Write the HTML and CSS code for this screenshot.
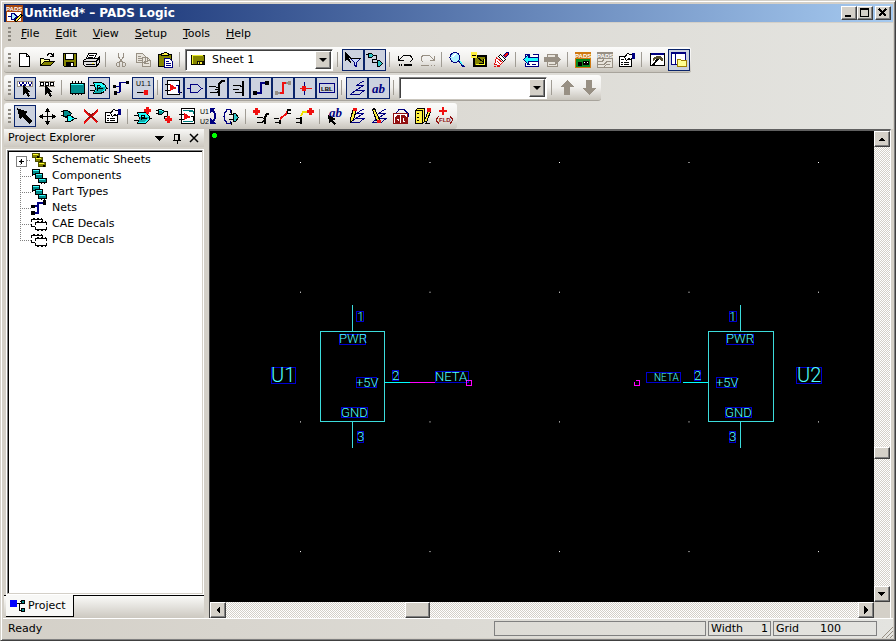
FILE: index.html
```html
<!DOCTYPE html>
<html lang="en">
<head>
<meta charset="utf-8">
<title>Untitled* - PADS Logic</title>
<link rel="stylesheet" href="styles.css">
</head>
<body>
<svg class="sprite" aria-hidden="true">
  <symbol id="new" viewBox="0 0 20 20"><path class="k fw" d="M4.500 3.500h7l3 3v10h-10zM11.500 3.500v3h3"/></symbol>
  <symbol id="open" viewBox="0 0 20 20"><path class="k fy" d="M3.500 15.500v-7h3l1 1h5v6z"/><path class="k fo" d="M3.500 15.500l4-4h10l-4 4z"/><path class="k" d="M10 5.500l2-2h2l2 2M16.500 3v4M13 6.500h4"/></symbol>
  <symbol id="save" viewBox="0 0 20 20"><path class="k fo" d="M4.500 3.500h13v13h-12l-1-1z"/><path class="k fw" d="M6.500 3.500h8v6h-8z"/><path class="k fk" d="M7.500 12.500h7v4h-7z"/><path class="fw" d="M12 13h2v3h-2z"/></symbol>
  <symbol id="print" viewBox="0 0 20 20"><path class="k fw" d="M7.500 3.500h8l-2 5h-8z"/><path class="k" d="M8 5.500h5M7 7.500h5"/><path class="k flg" d="M2.500 10.500l3-2h11l2-2v6l-3 4h-11l-2-2z"/><path class="k" d="M3 11.500h12v4M5 14.500h9M15 11.500l3-3"/><path class="fyy" d="M11 13h2v1h-2z"/></symbol>
  <symbol id="cut" viewBox="0 0 20 20"><path class="g" d="M7.500 3v4l4 5M12.500 3v4l-4 5M6.500 12.500h2v4h-2l-1-1v-2zM11.500 12.500h2l1 1v2l-1 1h-2z"/></symbol>
  <symbol id="copy" viewBox="0 0 20 20"><path class="g fl" d="M3.500 3.500h6l3 3v6h-9zM9.500 7.500h5l3 3v6h-8z"/><path class="g" d="M5 6.500h3M5 8.500h5M5 10.500h4M11 11.500h4M11 13.500h5M14.500 7.500v3h3"/></symbol>
  <symbol id="paste" viewBox="0 0 20 20"><path class="k fo" d="M3.500 4.500h13v12h-13z"/><path class="k fyy" d="M6.500 5.500v-2h2l1-1h2l1 1h1v2z"/><path class="n fw" d="M9.500 8.500h5l3 3v6h-8z"/><path class="n" d="M11 11.500h3M11 13.500h5M11 15.500h5"/></symbol>
  <symbol id="sheet" viewBox="0 0 20 20"><path class="k fo" d="M2.500 4.500h15v11h-15z"/><path class="y" d="M3 5.500h13M3.500 5v9"/><path class="k fyy" d="M9.500 11.500h7v3h-7z"/><path class="k" d="M11.500 12v3M14.500 12v3"/></symbol>
  <symbol id="filter" viewBox="0 0 20 20"><path class="fk" d="M2 2l6 6H6l2 4-1 1-3-4-2 2z"/><path class="n fb" d="M7.500 8.500h10l-4 4v4l-2-1v-3z"/><path class="k" d="M7 8.500h11"/></symbol>
  <symbol id="trace" viewBox="0 0 20 20"><path class="k fc" d="M3.500 3.500h3l2 2-2 2h-3zM12.500 10.500h2l3 3-3 3h-2z"/><path class="k" d="M1 4.500h2M8 5.500h3v4h-4v3h5"/></symbol>
  <symbol id="undo" viewBox="0 0 20 20"><path class="k" d="M3.500 6v4.500h5M4 10l4-4 4-1h3l2 3v2l-2 2"/><path class="k2" d="M4 15h1m1 0h1m2 0h8"/></symbol>
  <symbol id="redo" viewBox="0 0 20 20"><path class="g" d="M17.500 6v4.500h-5M17 10l-4-4-4-1H6L4 8v2l2 2"/><path class="g" d="M4 15.500h8m2 0h1m2 0h1"/></symbol>
  <symbol id="zoom" viewBox="0 0 20 20"><circle class="n flb" cx="8" cy="7.500" r="5"/><path class="fw" d="M5 6l3-3 1 1-3 4z"/><path class="n2" d="M12 11l5 6"/><path class="c" d="M12 10l4 5"/></symbol>
  <symbol id="board" viewBox="0 0 20 20"><path class="k2 fo" d="M5 6h12v10H5z"/><path class="y" d="M7 14.500h8v-6"/><path class="k" d="M8 7l6 5m0-3v4h-4"/><circle class="fyy" cx="5" cy="5" r="3.500"/><path class="k" d="M3 5.500h4"/></symbol>
  <symbol id="redraw" viewBox="0 0 20 20"><path class="r fw" d="M5.500 7.500l6 5-3 3-5-1z"/><path class="r" d="M3 16.500h2m1 0h3M7 9l3 3M6 11l3 3"/><path class="k fw" d="M7.500 6.500l2-2 5 5-2 2z"/><path class="n fr" d="M12.500 5.500l3-3h2v2l-3 3z"/></symbol>
  <symbol id="back" viewBox="0 0 20 20"><path class="n fw" d="M4.500 4.500h4v3h-4zM11.500 4.500h6v12h-13v-4"/><path class="n" d="M6 14.500h3m2 0h4"/><path class="n fcy" d="M2.500 9.500l5-5v3h10v4h-10v3z"/></symbol>
  <symbol id="next" viewBox="0 0 20 20"><path class="g fl" d="M4.500 4.500h10v12h-10zM6 14.500h7"/><path class="g fg" d="M17.500 9.500l-5-5v3h-11v4h11v3z"/></symbol>
  <symbol id="props" viewBox="0 0 20 20"><path class="k fw" d="M2.500 6.500h12v10h-12z"/><path class="k" d="M4 9.500h3m2 0h4M4 12.500h2m1 0h5M4 14.500h2m1 0h5"/><path class="k fw" d="M7.500 7.500l3-4 6 2-2 4-3-1-2 2z"/><path class="n fn" d="M15.500 3.500h2v5h-2z"/></symbol>
  <symbol id="hammer" viewBox="0 0 20 20"><path class="k fw" d="M3.500 3.500h14v12h-14z"/><path class="n2" d="M4 4h13"/><path class="fhead" d="M6 8l4-2h3l3 3v2h-2l-2-2-2 1-2-1-2 2z"/><path class="k2" d="M11 9l-6 7"/></symbol>
  <symbol id="explorer" viewBox="0 0 20 20"><path class="n fw" d="M2.500 2.500h14v12h-14z"/><path class="n2" d="M3 3h14"/><path class="n" d="M6.500 4v11"/><path class="o fy" d="M8.500 9.500h3l1 1h5v6h-9z"/></symbol>
  <symbol id="cursor" viewBox="0 0 20 20"><path class="fk" d="M8 7l8 7h-3l2 4-2 1-2-4-3 2z"/></symbol>
  <symbol id="wave" viewBox="0 0 20 20"><path class="g fw" d="M2.500 3.500h15v5h-15z"/><path class="n" d="M4 4l2 4 2-4m0 0l2 4 2-4m1 0l2 4 2-4"/><use href="#cursor"/></symbol>
  <symbol id="boxes" viewBox="0 0 20 20"><path class="k fw" d="M3.500 4.500h3v3h-3zM8.500 4.500h3v3h-3zM13.500 4.500h3v3h-3z"/><path class="g" d="M2 3.500h16M2 8.500h16"/><use href="#cursor"/></symbol>
  <symbol id="chip" viewBox="0 0 20 20"><path class="k" d="M5.500 3v14m3-14v14m3-14v14m3-14v14"/><path class="k ft" d="M3.500 5.500h14v10h-14z"/><path class="c" d="M4 6.500h12"/></symbol>
  <symbol id="gate" viewBox="0 0 20 20"><path class="k" d="M1 7.500h4m-4 5h4m12-2h2"/><path class="k fcy" d="M4.500 4.500h8l4 3 1 3-2 3-4 2h-7l2-5z"/><path class="ftt" d="M6 14l2-5h9l-3 4-3 2H6z"/><path class="k" d="M8.500 12.500v-5h2l1 1-2 2h4"/></symbol>
  <symbol id="net" viewBox="0 0 20 20"><path class="n" d="M3 14.500h5v-10h8M8.500 8.500h-4M9.500 5v9"/><path class="fk" d="M2 7h3v3H2zM3 13h3v4H3zM15 3h3v3h-3z"/></symbol>
  <symbol id="part" viewBox="0 0 20 20"><path class="k fw" d="M4.500 2.500h12v14h-12z"/><path class="k" d="M2 6.500h5m-5 6h5m10 2h2"/><path class="fr" d="M7 6l7 4-7 3z"/><path class="n" d="M13 7.500h2v7h3"/></symbol>
  <symbol id="port" viewBox="0 0 20 20"><path class="n" d="M2 10.500h3.500m0-4h7l4 4-4 4h-7zM16 10.500h2"/></symbol>
  <symbol id="bus1" viewBox="0 0 20 20"><path class="k2" d="M18 3h-3l-3 3v12"/><path class="k" d="M2 8.500h6l2 1h2M3 14.500h6l3-1M8 11.500h4"/></symbol>
  <symbol id="bus2" viewBox="0 0 20 20"><path class="k2" d="M14 3v15"/><path class="k" d="M4 7.500h6l3 1M6 14.500h8M4 11.500h6"/></symbol>
  <symbol id="wire" viewBox="0 0 20 20"><path class="n2" d="M4 15h6V5h6"/><path class="fk" d="M2 13h4v4H2zM14 3h4v4h-4z"/></symbol>
  <symbol id="wirer" viewBox="0 0 20 20"><path class="g2" d="M3 15h6m1-10h7"/><path class="r2" d="M7 15h3V5h3"/><path class="fg" d="M2 13h3v4H2zM15 3h3v4h-3z"/></symbol>
  <symbol id="junction" viewBox="0 0 20 20"><path class="r" d="M5 10.500h12"/><path class="n" d="M9.500 4v13"/><circle class="fr" cx="9" cy="10.500" r="2.500"/></symbol>
  <symbol id="scribble" viewBox="0 0 20 20"><path class="n" d="M16.500 3l-7 4.500h7l-7 4.500h8l-5 4.500h-9l6-5"/></symbol>
  <symbol id="up" viewBox="0 0 20 20"><path class="fgd" d="M10 2l7 7h-4v8H7V9H3z"/></symbol>
  <symbol id="down" viewBox="0 0 20 20"><path class="fgd" d="M10 17l7-7h-4V2H7v8H3z"/></symbol>
  <symbol id="select" viewBox="0 0 20 20"><path class="fk" d="M2 2l11 4-3 2 7 7-3 3-7-7-2 3z"/></symbol>
  <symbol id="move" viewBox="0 0 20 20"><path class="k" d="M10.500 3v15M3 10.500h15"/><path class="fk" d="M10.500 2l3 4h-6zM10.500 19l3-4h-6zM2 10.500l4-3v6zM19 10.500l-4-3v6z"/></symbol>
  <symbol id="dup" viewBox="0 0 20 20"><path class="k" d="M2 5.500h3m-3 4h3m1 2h3m-3 4h3m6-3h3"/><path class="k ft" d="M4.500 4.500h4l4 3-3 3h-5z"/><path class="k fcy" d="M8.500 9.500h3l4 3-4 3h-3z"/></symbol>
  <symbol id="delete" viewBox="0 0 20 20"><path class="r2" d="M3 4l13 12M17 4L3 17"/><path class="dr" d="M4 4l13 12M16 4L4 15"/></symbol>
  <symbol id="plus" viewBox="0 0 20 20"><path class="fr" d="M2 0h3v2h2v3H5v2H2V5H0V2h2z"/></symbol>
  <symbol id="addpart" viewBox="0 0 20 20"><path class="k" d="M1 9.500h4m-4 5h4m12-2h2"/><path class="k fcy" d="M4.500 6.500h8l4 4v3l-4 4h-8l2-5z"/><path class="ftt" d="M6 16l1-5h9l-4 5z"/><path class="k" d="M8.500 14v-5h3v2l-2 1h4"/><use href="#plus" x="11" y="1" width="20" height="20"/></symbol>
  <symbol id="addnet" viewBox="0 0 20 20"><path class="k ft" d="M3.500 3.500h3l3 2-3 3h-3z"/><path class="c" d="M4 4.500h2l2 1"/><path class="k" d="M1 4.500h2m-2 3h2m7-2h2v5h-3v2h3"/><use href="#plus" x="10" y="10" width="20" height="20"/></symbol>
  <symbol id="newhier" viewBox="0 0 20 20"><path class="k fw" d="M4.500 2.500h13v15h-13z"/><path class="t" d="M6 4.500h10M12 5.500h4v2M6 15.500h10"/><path class="k" d="M2 8.500h5m-5 5h5m7-3h2v4h2"/><path class="fr" d="M7 7l7 4-7 3z"/></symbol>
  <symbol id="swappin" viewBox="0 0 20 20"><path class="k fc" d="M12.500 7.500h2l3 4-3 4h-2z"/><path class="k" d="M8 8.500h4m-4 5h4m-2-10v4m0 8v3"/><path class="n" d="M6 4.500l-2 2-1 4 1 4 2 2M5 3.500h4v3M5 17.500h4v-3"/></symbol>
  <symbol id="addbus" viewBox="0 0 20 20"><path class="k2" d="M18 8h-2l-2 3v7"/><path class="k" d="M6 11.500h5l2 1M6 16.500h5l2-2"/><use href="#plus" x="2" y="2" width="20" height="20"/></symbol>
  <symbol id="splitbus" viewBox="0 0 20 20"><path class="k2" d="M18 4h-4M7 18v-4"/><path class="r2" d="M7 13l7-6V5"/><path class="k" d="M1 12.500h5m-4 4h4m8-13v4h4"/></symbol>
  <symbol id="extbus" viewBox="0 0 20 20"><path class="k2" d="M6 11v7"/><path class="y2" d="M6 10l2-4h5"/><path class="k" d="M1 12.500h4m-4 4h4"/><use href="#plus" x="12" y="2" width="20" height="20"/></symbol>
  <symbol id="pencil" viewBox="0 0 20 20"><path class="k fyy" d="M3.500 12.500l3-10 3 1-3 10-3 3z"/><path class="fr" d="M6 2h4v3H6z"/></symbol>
  <symbol id="draw" viewBox="0 0 20 20"><use href="#scribble"/><use href="#pencil"/></symbol>
  <symbol id="modify" viewBox="0 0 20 20"><use href="#scribble"/><path class="k fyy" d="M3.500 3.500l2-1 5 11v3l-3-2z"/><path class="fr" d="M8 14h4v3H8z"/></symbol>
  <symbol id="book" viewBox="0 0 20 20"><path class="k fyy" d="M2.500 4.500l2-2h7v13l-2 2h-7z"/><path class="k" d="M2 4.500h7v12M4 7.500h2m-2 4h2m-2 3h2M12 17.500h5"/><path class="k fyy" d="M11.500 14.500l4-10 2 1-4 11z"/><path class="fr" d="M14 2h4v4h-4z"/></symbol>
  <symbol id="sheets" viewBox="0 0 16 16"><g class="o2"><path d="M1.500 1.500h7v4h-7zM4.500 5.500h7v4h-7zM7.500 10.500h7v4h-7z"/></g><path class="y" d="M2 2.500h5M5 6.500h5M8 11.500h5"/><path class="fk" d="M6 4h2v2H6zM9 8h2v2H9zM12 13h2v2h-2z"/></symbol>
  <symbol id="chips" viewBox="0 0 16 16"><g class="k ft"><path d="M1.500 1.500h7v5h-7zM4.500 5.500h7v5h-7zM7.500 10.500h8v4h-8z"/></g><path class="c" d="M2 2.500h6M5 6.500h6M8 11.500h6"/><path class="k" d="M1 7.500h1m2 0h1M10 15.500h1m2 0h1"/></symbol>
  <symbol id="nets" viewBox="0 0 16 16"><path class="n2" d="M1 13h6V3h7M2 6h5"/><path class="fk" d="M0 5h4v3H0zM0 11h4v4H0zM12 0h3v5h-3z"/></symbol>
  <symbol id="decal" viewBox="0 0 16 16"><path class="k fw" d="M.5 3.500h11v7H.5z"/><path class="k fw" d="M4.500 6.500h11v7h-11z"/><path class="k" d="M2 2.500h2m2 0h2m2 0h1M6 5.500h2m2 0h2m2 0h1M6 14.500h2m2 0h2m2 0h1"/><path class="wh" d="M.5 6v2m4 1v2m11-2v2"/></symbol>
  <symbol id="tree" viewBox="0 0 16 16"><path class="fblue" d="M0 2h7v7H0z"/><path class="k" d="M7 5.500h4m-1.500 0v7h2m-2-9h2"/><path class="k ft" d="M11.500 2.500h3v3h-3zM11.500 10.500h3v3h-3z"/></symbol>
</svg>

<div class="window">
  <header class="titlebar">
    <svg class="appicon icon" viewBox="0 0 17 17"><path class="fbrown" d="M0 0h17v17H0z"/><path class="fw" d="M1 7h14v9H1z"/><path class="n flb" d="M2 11.500h3m0-3h3l3 3-3 3H5z"/><path class="k fyy" d="M8.500 15.500l6-6 2 1-6 6z"/><text class="t6 tw" x="0" y="6">PADS</text></svg>
    <h1>Untitled* – PADS Logic</h1>
    <button class="cap" aria-label="Minimize"><svg viewBox="0 0 12 10"><path class="fk" d="M2 7h6v2H2z"/></svg></button>
    <button class="cap" aria-label="Maximize"><svg viewBox="0 0 12 10"><path class="k" d="M1.500 1v7.500h8V1"/><path class="k2" d="M1 1h9"/></svg></button>
    <button class="cap close" aria-label="Close"><svg viewBox="0 0 12 10"><path class="kx" d="M2 1l7 7M9 1L2 8"/></svg></button>
  </header>

  <div class="bars">
    <nav class="menu">
      <span class="grip"></span>
      <button><u>F</u>ile</button><button><u>E</u>dit</button><button><u>V</u>iew</button><button><u>S</u>etup</button><button><u>T</u>ools</button><button><u>H</u>elp</button>
    </nav>

    <div class="toolbar" role="toolbar" aria-label="Standard">
      <span class="grip"></span>
      <button class="tb" aria-label="New"><svg><use href="#new"/></svg></button>
      <button class="tb" aria-label="Open"><svg><use href="#open"/></svg></button>
      <button class="tb" aria-label="Save"><svg><use href="#save"/></svg></button>
      <button class="tb" aria-label="Print"><svg><use href="#print"/></svg></button>
      <span class="sep"></span>
      <button class="tb" aria-label="Cut"><svg><use href="#cut"/></svg></button>
      <button class="tb" aria-label="Copy"><svg><use href="#copy"/></svg></button>
      <button class="tb" aria-label="Paste"><svg><use href="#paste"/></svg></button>
      <span class="sep"></span>
      <div class="combo">
        <svg><use href="#sheet"/></svg>
        <select aria-label="Sheet"><option>Sheet 1</option></select>
        <span class="drop" aria-hidden="true"></span>
      </div>
      <span class="sep"></span>
      <button class="tb on" aria-label="Selection filter"><svg><use href="#filter"/></svg></button>
      <button class="tb on" aria-label="Schematic toolbar"><svg><use href="#trace"/></svg></button>
      <span class="sep"></span>
      <button class="tb" aria-label="Undo"><svg><use href="#undo"/></svg></button>
      <button class="tb" aria-label="Redo"><svg><use href="#redo"/></svg></button>
      <span class="sep"></span>
      <button class="tb" aria-label="Zoom"><svg><use href="#zoom"/></svg></button>
      <button class="tb" aria-label="Sheet view"><svg><use href="#board"/></svg></button>
      <button class="tb" aria-label="Redraw"><svg><use href="#redraw"/></svg></button>
      <span class="sep"></span>
      <button class="tb" aria-label="Previous view"><svg><use href="#back"/></svg></button>
      <button class="tb" aria-label="Next view"><svg><use href="#next"/></svg></button>
      <span class="sep"></span>
      <button class="tb" aria-label="PADS Layout"><svg class="icon" viewBox="0 0 20 20"><path class="forange" d="M2 2h16v16H2z"/><path class="fgr" d="M3 9h14v8H3z"/><path class="k fk" d="M5.500 12.500h3v3h-3z"/><path class="fk" d="M10 11h6v4h-6z"/><path class="wh" d="M11 12.500h1m2 0h1"/><text class="t6 tw" x="2" y="8">PADS</text></svg></button>
      <button class="tb" aria-label="PADS Router"><svg class="icon" viewBox="0 0 20 20"><path class="g fl" d="M2.500 2.500h15v15h-15z"/><path class="fg" d="M2 2h16v7H2z"/><path class="g" d="M3 11.500h4l2-2M3 14.500h6l3-3h4M9 17l3-3h3"/><text class="t6 tw" x="2" y="8">PADS</text></svg></button>
      <button class="tb" aria-label="Properties"><svg><use href="#props"/></svg></button>
      <span class="sep"></span>
      <button class="tb" aria-label="Output window"><svg><use href="#hammer"/></svg></button>
      <button class="tb on" aria-label="Project Explorer"><svg><use href="#explorer"/></svg></button>
    </div>

    <div class="toolbar" role="toolbar" aria-label="Selection filter">
      <span class="grip"></span>
      <button class="tb on" aria-label="Anything"><svg><use href="#wave"/></svg></button>
      <button class="tb" aria-label="Nothing"><svg><use href="#boxes"/></svg></button>
      <span class="sep"></span>
      <button class="tb" aria-label="Parts"><svg><use href="#chip"/></svg></button>
      <button class="tb on" aria-label="Gates"><svg><use href="#gate"/></svg></button>
      <button class="tb" aria-label="Nets"><svg><use href="#net"/></svg></button>
      <button class="tb on" aria-label="Pins"><svg class="icon" viewBox="0 0 20 20"><text class="t7 tk" x="3" y="8">U1.1</text><path class="k" d="M4 14.500h6"/><circle class="fr" cx="13" cy="14.500" r="2.500"/></svg></button>
      <span class="sep"></span>
      <button class="tb on" aria-label="Hierarchical symbols"><svg><use href="#part"/></svg></button>
      <button class="tb on" aria-label="Off-page"><svg><use href="#port"/></svg></button>
      <button class="tb on" aria-label="Buses"><svg><use href="#bus1"/></svg></button>
      <button class="tb on" aria-label="Bus segments"><svg><use href="#bus2"/></svg></button>
      <button class="tb on" aria-label="Connections"><svg><use href="#wire"/></svg></button>
      <button class="tb on" aria-label="Connection segments"><svg><use href="#wirer"/></svg></button>
      <button class="tb on" aria-label="Tie dots"><svg><use href="#junction"/></svg></button>
      <button class="tb on" aria-label="Labels"><svg class="icon" viewBox="0 0 20 20"><path class="n" d="M2.500 5.500h15v9h-15z"/><text class="t6 tk" x="4" y="13">LBL</text></svg></button>
      <span class="sep"></span>
      <button class="tb on" aria-label="Drafting items"><svg><use href="#scribble"/></svg></button>
      <button class="tb on" aria-label="Text"><svg class="icon" viewBox="0 0 20 20"><text class="tab" x="3" y="15">ab</text></svg></button>
      <span class="sep"></span>
      <div class="combo">
        <input type="text" aria-label="Find">
        <button class="drop" aria-label="Show list"></button>
      </div>
      <span class="sep"></span>
      <button class="tb" aria-label="Up"><svg><use href="#up"/></svg></button>
      <button class="tb" aria-label="Down"><svg><use href="#down"/></svg></button>
    </div>

    <div class="toolbar" role="toolbar" aria-label="Schematic editing">
      <span class="grip"></span>
      <button class="tb on" aria-label="Select"><svg><use href="#select"/></svg></button>
      <button class="tb" aria-label="Move"><svg><use href="#move"/></svg></button>
      <button class="tb" aria-label="Duplicate"><svg><use href="#dup"/></svg></button>
      <button class="tb" aria-label="Delete"><svg><use href="#delete"/></svg></button>
      <button class="tb" aria-label="Item properties"><svg><use href="#props"/></svg></button>
      <span class="sep"></span>
      <button class="tb" aria-label="Add part"><svg><use href="#addpart"/></svg></button>
      <button class="tb" aria-label="Add connection"><svg><use href="#addnet"/></svg></button>
      <button class="tb" aria-label="New hierarchical symbol"><svg><use href="#newhier"/></svg></button>
      <button class="tb" aria-label="Swap reference designators"><svg class="icon" viewBox="0 0 20 20"><text class="t7 tk" x="1" y="8">U1</text><text class="t7 tk" x="1" y="18">U2</text><path class="n2" d="M13 4q7 6 0 12"/><path class="fn" d="M11 2h5l-5 5zM11 12v6h6z"/></svg></button>
      <button class="tb" aria-label="Swap pins"><svg><use href="#swappin"/></svg></button>
      <span class="sep"></span>
      <button class="tb" aria-label="Add bus"><svg><use href="#addbus"/></svg></button>
      <button class="tb" aria-label="Split bus"><svg><use href="#splitbus"/></svg></button>
      <button class="tb" aria-label="Extend bus"><svg><use href="#extbus"/></svg></button>
      <span class="sep"></span>
      <button class="tb" aria-label="Create text"><svg class="icon" viewBox="0 0 20 20"><text class="tab" x="4" y="11">ab</text><path class="fk" d="M3 9l8 4-3 1 3 4-2 1-3-4-2 2z"/></svg></button>
      <button class="tb" aria-label="Create 2D line"><svg><use href="#draw"/></svg></button>
      <button class="tb" aria-label="Modify 2D line"><svg><use href="#modify"/></svg></button>
      <button class="tb" aria-label="Library line"><svg class="icon" viewBox="0 0 20 20"><path class="n" d="M5 7.500l3-4h5l4 4v3"/><path class="dr fw" d="M2.500 7.500h14v10h-14z"/><path class="fdr" d="M4 11l2-2h3v8H4zM10 9h4l2 3v5h-6z"/><path class="wh" d="M6 13h1.500v2M12 12v3h2"/></svg></button>
      <button class="tb" aria-label="Library"><svg><use href="#book"/></svg></button>
      <button class="tb" aria-label="Add field"><svg class="icon" viewBox="0 0 20 20"><path class="r2" d="M8 1v8M4 5h8"/><path class="dr" d="M4 10l-3 4 3 4M15 10l3 4-3 4"/><text class="t6 tdr" x="4" y="16">FLD</text></svg></button>
    </div>
  </div>

  <main class="work">
    <aside class="panel">
      <div class="panelhead">
        <h2>Project Explorer</h2>
        <button aria-label="Menu"><svg viewBox="0 0 12 12"><path class="fk" d="M1 4h9l-4 5H5z"/></svg></button>
        <button aria-label="Pin"><svg viewBox="0 0 12 12"><path class="k" d="M3.500 8V2.500h5V8M2 8.500h8M6.500 9v3M7.500 3v5"/></svg></button>
        <button aria-label="Close"><svg viewBox="0 0 12 12"><path class="kt" d="M2 2l8 8M10 2l-8 8"/></svg></button>
      </div>
      <ul class="tree">
        <li class="parent"><svg><use href="#sheets"/></svg>Schematic Sheets</li>
        <li><svg><use href="#chips"/></svg>Components</li>
        <li><svg><use href="#chips"/></svg>Part Types</li>
        <li><svg><use href="#nets"/></svg>Nets</li>
        <li><svg><use href="#decal"/></svg>CAE Decals</li>
        <li><svg><use href="#decal"/></svg>PCB Decals</li>
      </ul>
      <div class="tabs"><button><svg><use href="#tree"/></svg>Project</button></div>
    </aside>

    <section class="view">
      <svg class="schematic" role="img" aria-label="Schematic sheet">
        <defs>
          <pattern id="grid" patternUnits="userSpaceOnUse" x="90" y="31" width="129.500" height="129.700"><path class="fw" d="M0 0h1v1H0z"/></pattern>
        </defs>
        <rect width="100%" height="100%" fill="url(#grid)"/>
        <circle class="origin" cx="4.500" cy="4.500" r="2.500"/>
        <g>
          <path class="tag" d="M61.500 236.500h24v16h-24zM146.500 180.500h7v10h-7zM129.500 203.500h26v10h-26zM146.500 246.500h20v10h-20zM182.500 239.500h6v10h-6zM131.500 276.500h26v10h-26zM147.500 300.500h6v11h-6zM225.500 240.500h33v11h-33z"/>
          <path class="sym" d="M110.500 200.500h64v90h-64zM142.500 174v26M142.500 291v26"/>
          <path class="pin" d="M175 251.500h25"/><path class="wire" d="M200 251.500h25M256.500 249.500h5v5h-5z"/>
          <text class="ref" x="61" y="251">U1</text>
          <text x="147" y="190">1</text><text x="129" y="212">PWR</text><text x="146" y="256">+5V</text><text x="182" y="249">2</text><text x="131" y="286">GND</text><text x="147" y="310">3</text>
          <text x="225" y="250">NETA</text>
        </g>
        <g>
          <path class="tag" d="M586.500 236.500h25v16h-25zM519.500 180.500h7v10h-7zM516.500 203.500h27v10h-27zM506.500 246.500h20v10h-20zM484.500 239.500h6v10h-6zM515.500 276.500h26v10h-26zM519.500 300.500h6v11h-6zM436.500 241.500h34v10h-34z"/>
          <path class="sym" d="M498.500 200.500h65v90h-65zM530.500 174v26M530.500 291v26"/>
          <path class="pin" d="M473 251.500h25"/><path class="wire" d="M424.500 251v3.500h5V249.500h-4"/>
          <text class="ref" x="587" y="251">U2</text>
          <text x="519" y="190">1</text><text x="516" y="212">PWR</text><text x="506" y="256">+5V</text><text x="484" y="249">2</text><text x="515" y="286">GND</text><text x="519" y="310">3</text>
          <text class="small" x="444" y="250">NETA</text>
        </g>
      </svg>
      <div class="scroll vert">
        <button aria-label="Scroll up"><svg viewBox="0 0 12 12"><path class="fk" d="M2 8h7L6 5H5z"/></svg></button>
        <span class="before"></span><span class="thumb"></span><span class="after"></span>
        <button aria-label="Scroll down"><svg viewBox="0 0 12 12"><path class="fk" d="M2 4h7L6 8H5z"/></svg></button>
      </div>
      <div class="scroll horiz">
        <button aria-label="Scroll left"><svg viewBox="0 0 12 12"><path class="fk" d="M8 2v8L4 6z"/></svg></button>
        <span class="before"></span><span class="thumb"></span><span class="after"></span>
        <button aria-label="Scroll right"><svg viewBox="0 0 12 12"><path class="fk" d="M4 2v8l4-4z"/></svg></button>
      </div>
      <span class="corner"></span>
    </section>
  </main>

  <footer class="status">
    <span class="ready">Ready</span>
    <span class="cell message"></span>
    <span class="cell width"><span>Width</span><span>1</span></span>
    <span class="cell gridsize"><span>Grid</span><span>100</span></span>
    <svg class="sizer" viewBox="0 0 12 12"><path class="g" d="M1 12L12 1M5 12l7-7M9 12l3-3"/></svg>
  </footer>
</div>
</body>
</html>
```

FILE: styles.css
```css
* { box-sizing: border-box; }
body, h1, h2, ul { margin: 0; padding: 0; }
body, button, input, select {
  font: 11px/16px "DejaVu Sans", sans-serif;
  color: #000;
}
button { padding: 0; border: 0; background: none; }
svg { display: block; flex: none; shape-rendering: crispEdges; }
.sprite { position: absolute; width: 0; height: 0; }

.window {
  display: flex;
  flex-direction: column;
  height: 100vh;
  padding: 2px;
  background: #d4d0c8;
  border: 1px solid #d4d0c8;
  border-right-color: #404040;
  border-bottom-color: #404040;
  box-shadow: inset 1px 1px #fff, inset -1px -1px #808080;
  overflow: hidden;
}

/* title bar */
.titlebar {
  display: flex;
  align-items: center;
  height: 18px;
  margin: 1px 0 1px 1px;
  padding-right: 2px;
  background: linear-gradient(90deg, #0a246a, #a6caf0);
}
.appicon { width: 17px; height: 17px; margin: 0 1px 0 2px; }
h1 { flex: 1; font-size: 12px; font-weight: bold; color: #fff; }
.cap, .scroll button, .thumb, .drop {
  background: #d4d0c8;
  border: 1px solid;
  border-color: #fff #404040 #404040 #fff;
  box-shadow: inset -1px -1px #808080;
}
.cap { width: 16px; height: 14px; }
.cap svg { width: 12px; height: 10px; margin: 1px; }
.close { margin-left: 2px; }

/* menu and toolbars */
.bars {
  display: flex;
  flex-direction: column;
  align-items: flex-start;
  gap: 2px;
  padding: 0 1px;
  background: linear-gradient(90deg, #d4d0c8, #e4e4e0);
}
.menu { display: flex; align-items: center; height: 22px; }
.menu button { padding: 0 8px; line-height: 18px; }
.menu .grip { margin-right: 2px; }
.toolbar {
  display: flex;
  align-items: center;
  height: 26px;
  padding-right: 1px;
  background: linear-gradient(#fcfcfb, #f0efec 50%, #c8c4bc);
  border-bottom: 1px solid #a8a49c;
  border-radius: 3px;
}
.toolbar:last-child { border-bottom: 0; }
.grip {
  width: 3px;
  height: 14px;
  margin: 0 3px 0 4px;
  background: repeating-linear-gradient(#8c8880 0 2px, transparent 2px 4px);
}
.sep { width: 1px; height: 15px; margin: 0 4px 0 3px; background: #a09c94; }
.tb { width: 22px; height: 22px; border: 1px solid transparent; }
.tb svg { width: 20px; height: 20px; }
.on { background: #ccd2df; border-color: #0a246a; }
.combo {
  display: flex;
  width: 148px;
  height: 22px;
  margin: 0 1px;
  padding: 1px;
  background: #fff;
  border: 1px solid;
  border-color: #808080 #fff #fff #808080;
  box-shadow: inset 1px 1px #404040;
}
.combo > svg { width: 20px; height: 18px; margin-left: 1px; }
.combo select, .combo input {
  flex: 1;
  min-width: 0;
  padding: 0 4px;
  appearance: none;
  background: none;
  border: 0;
  outline: 0;
}
.drop {
  display: flex;
  align-items: center;
  justify-content: center;
  width: 16px;
  height: 18px;
}
.drop::after {
  content: "";
  border: 4px solid transparent;
  border-top-color: #000;
  border-bottom: 0;
}

/* work area */
.work { display: flex; flex: 1; min-height: 0; padding-left: 1px; }
.panel { display: flex; flex-direction: column; width: 200px; margin-right: 5px; }
.panelhead {
  display: flex;
  align-items: center;
  height: 18px;
  padding: 0 2px 0 4px;
  background: linear-gradient(#f8f8f6, #ccc8c0);
}
.panelhead button { width: 17px; }
.panelhead svg { width: 12px; height: 12px; margin: 0 auto; }
h2 { flex: 1; font-size: 11px; font-weight: normal; }
.tree {
  flex: 1;
  margin: 3px 1px 1px 3px;
  padding: 1px 0 0 12px;
  list-style: none;
  background: #fff;
  border: 1px solid #808080;
  border-right-color: #d4d0c8;
  border-bottom-color: #d4d0c8;
  box-shadow: inset 1px 1px #000, 0 0 0 1px #fff;
}
.tree li {
  position: relative;
  display: flex;
  align-items: center;
  gap: 5px;
  height: 16px;
  padding-left: 11px;
}
.tree li svg { width: 16px; height: 16px; }
.tree li::before {
  content: "";
  position: absolute;
  left: 0;
  top: -8px;
  width: 10px;
  height: 16px;
  border: 1px dotted #808080;
  border-width: 0 0 1px 1px;
}
.tree .parent::after {
  content: "";
  position: absolute;
  left: -4px;
  top: 4px;
  width: 9px;
  height: 9px;
  border: 1px solid #808080;
  background:
    linear-gradient(#000, #000) center / 5px 1px no-repeat,
    linear-gradient(#000, #000) center / 1px 5px no-repeat,
    #fff;
}
.tree .parent::before { border-left: 0; }
.tabs {
  height: 23px;
  padding-left: 2px;
  background: linear-gradient(#fafaf8, #ccc8c0);
  border-top: 1px solid #000;
}
.tabs button {
  display: flex;
  align-items: center;
  gap: 2px;
  height: 22px;
  padding: 0 7px 0 4px;
  margin-top: -1px;
  background: #f8f8f6;
  border-right: 1px solid #000;
  border-bottom: 1px solid #000;
}
.tabs svg { width: 16px; height: 16px; }

.view {
  display: grid;
  flex: 1;
  grid-template: minmax(0, 1fr) 16px / minmax(0, 1fr) 16px;
  margin-right: 2px;
  border: 1px solid #404040;
  border-width: 2px 1px 0 1px;
  border-top-color: #606060;
  border-right-color: #fff;
}
.schematic { width: 100%; height: 100%; background: #000; }
.schematic path { fill: none; }
.schematic .fw { fill: #fff; }
.origin { fill: #0f0; }
.tag { stroke: #0000d0; }
.sym { stroke: #3cdcdc; }
.pin { stroke: #00ffff; }
.wire { stroke: #f0f; }
.schematic text { font: 300 13px Roboto, sans-serif; fill: #50ffff; }
.schematic .ref { font-size: 20px; }
.schematic .small { font-size: 10px; }

.scroll {
  display: flex;
  background: repeating-conic-gradient(#fff 0 25%, #d4d0c8 0 50%) 0 0 / 2px 2px;
}
.vert { flex-direction: column; }
.scroll button { width: 16px; height: 16px; flex: none; }
.scroll svg { width: 12px; height: 12px; margin: 1px; }
.vert .before { flex: 301; }
.vert .after { flex: 127; }
.vert .thumb { height: 12px; }
.horiz .before { flex: 179; }
.horiz .after { flex: 428; }
.horiz .thumb { width: 25px; }
.corner { background: #d4d0c8; }

/* status bar */
.status {
  display: flex;
  align-items: center;
  gap: 2px;
  height: 20px;
  padding-left: 5px;
  background: linear-gradient(90deg, #d4d0c8, #e4e4e0);
  border-top: 1px solid #fff;
}
.ready { flex: 1; }
.cell {
  display: flex;
  align-items: center;
  height: 15px;
  padding: 0 2px;
  border: 1px solid #808080;
}
.message { width: 212px; }
.width { width: 63px; justify-content: space-between; }
.gridsize { width: 104px; gap: 21px; }
.sizer { width: 12px; height: 12px; margin-left: 2px; align-self: flex-end; }

/* icon strokes and fills */
.sprite path, .icon path, .cap path, .panelhead path, .scroll path, .sizer path { fill: none; }
.k, .kx, .kt { stroke: #000; }
.kx { stroke-width: 2px; }
.kt { stroke-width: 1.5px; shape-rendering: auto; }
.k2 { stroke: #000; stroke-width: 2px; }
.n { stroke: #000080; }
.n2 { stroke: #000080; stroke-width: 2px; }
.g { stroke: #989084; }
.g2 { stroke: #909090; stroke-width: 2px; }
.r { stroke: #e01010; }
.r2 { stroke: #f01010; stroke-width: 2px; }
.dr { stroke: #901010; }
.c { stroke: #40ffff; }
.t { stroke: #008080; }
.y { stroke: #ffff30; }
.y2 { stroke: #f0e000; stroke-width: 2px; }
.o { stroke: #a08000; }
.wh { stroke: #fff; }
.sprite path.fw, .icon path.fw { fill: #fff; }
.sprite path.fk, .icon path.fk, .cap path.fk, .panelhead path.fk, .scroll path.fk { fill: #000; }
.sprite path.fy { fill: #ffff90; }
.sprite .fyy, .icon path.fyy { fill: #fff040; }
.sprite path.fo { fill: #858500; }
.sprite .flb, .icon path.flb { fill: #b0f0ff; }
.sprite path.fl, .icon path.fl { fill: #e8e4dc; }
.sprite path.flg { fill: #e0e0e0; }
.sprite path.fg, .icon path.fg, .sprite path.fgd { fill: #989084; }
.sprite path.fhead { fill: #585030; }
.sprite path.fb { fill: #c8d8ff; }
.sprite path.fc { fill: #30c8c8; }
.sprite path.fcy { fill: #20ffff; }
.sprite path.ft, .sprite .ft path { fill: #008c8c; }
.sprite path.ftt { fill: #10a8a8; }
.sprite path.fn, .icon path.fn { fill: #000080; }
.sprite .fr, .icon .fr { fill: #f01010; }
.icon path.fdr { fill: #901010; }
.icon path.fgr { fill: #088820; }
.icon path.forange { fill: #d07810; }
.icon path.fbrown { fill: #a84810; }
.sprite path.fblue { fill: #00f; }
.sprite .o2 path { fill: #858500; stroke: #505000; }
.t6 { font: bold 6px "Liberation Sans", sans-serif; }
.t7 { font: 7px "Liberation Sans", sans-serif; }
.tk { fill: #000; }
.tw { fill: #fff; }
.tdr { fill: #901010; }
.tab { font: italic bold 13px "Liberation Serif", serif; fill: #000080; }
```
